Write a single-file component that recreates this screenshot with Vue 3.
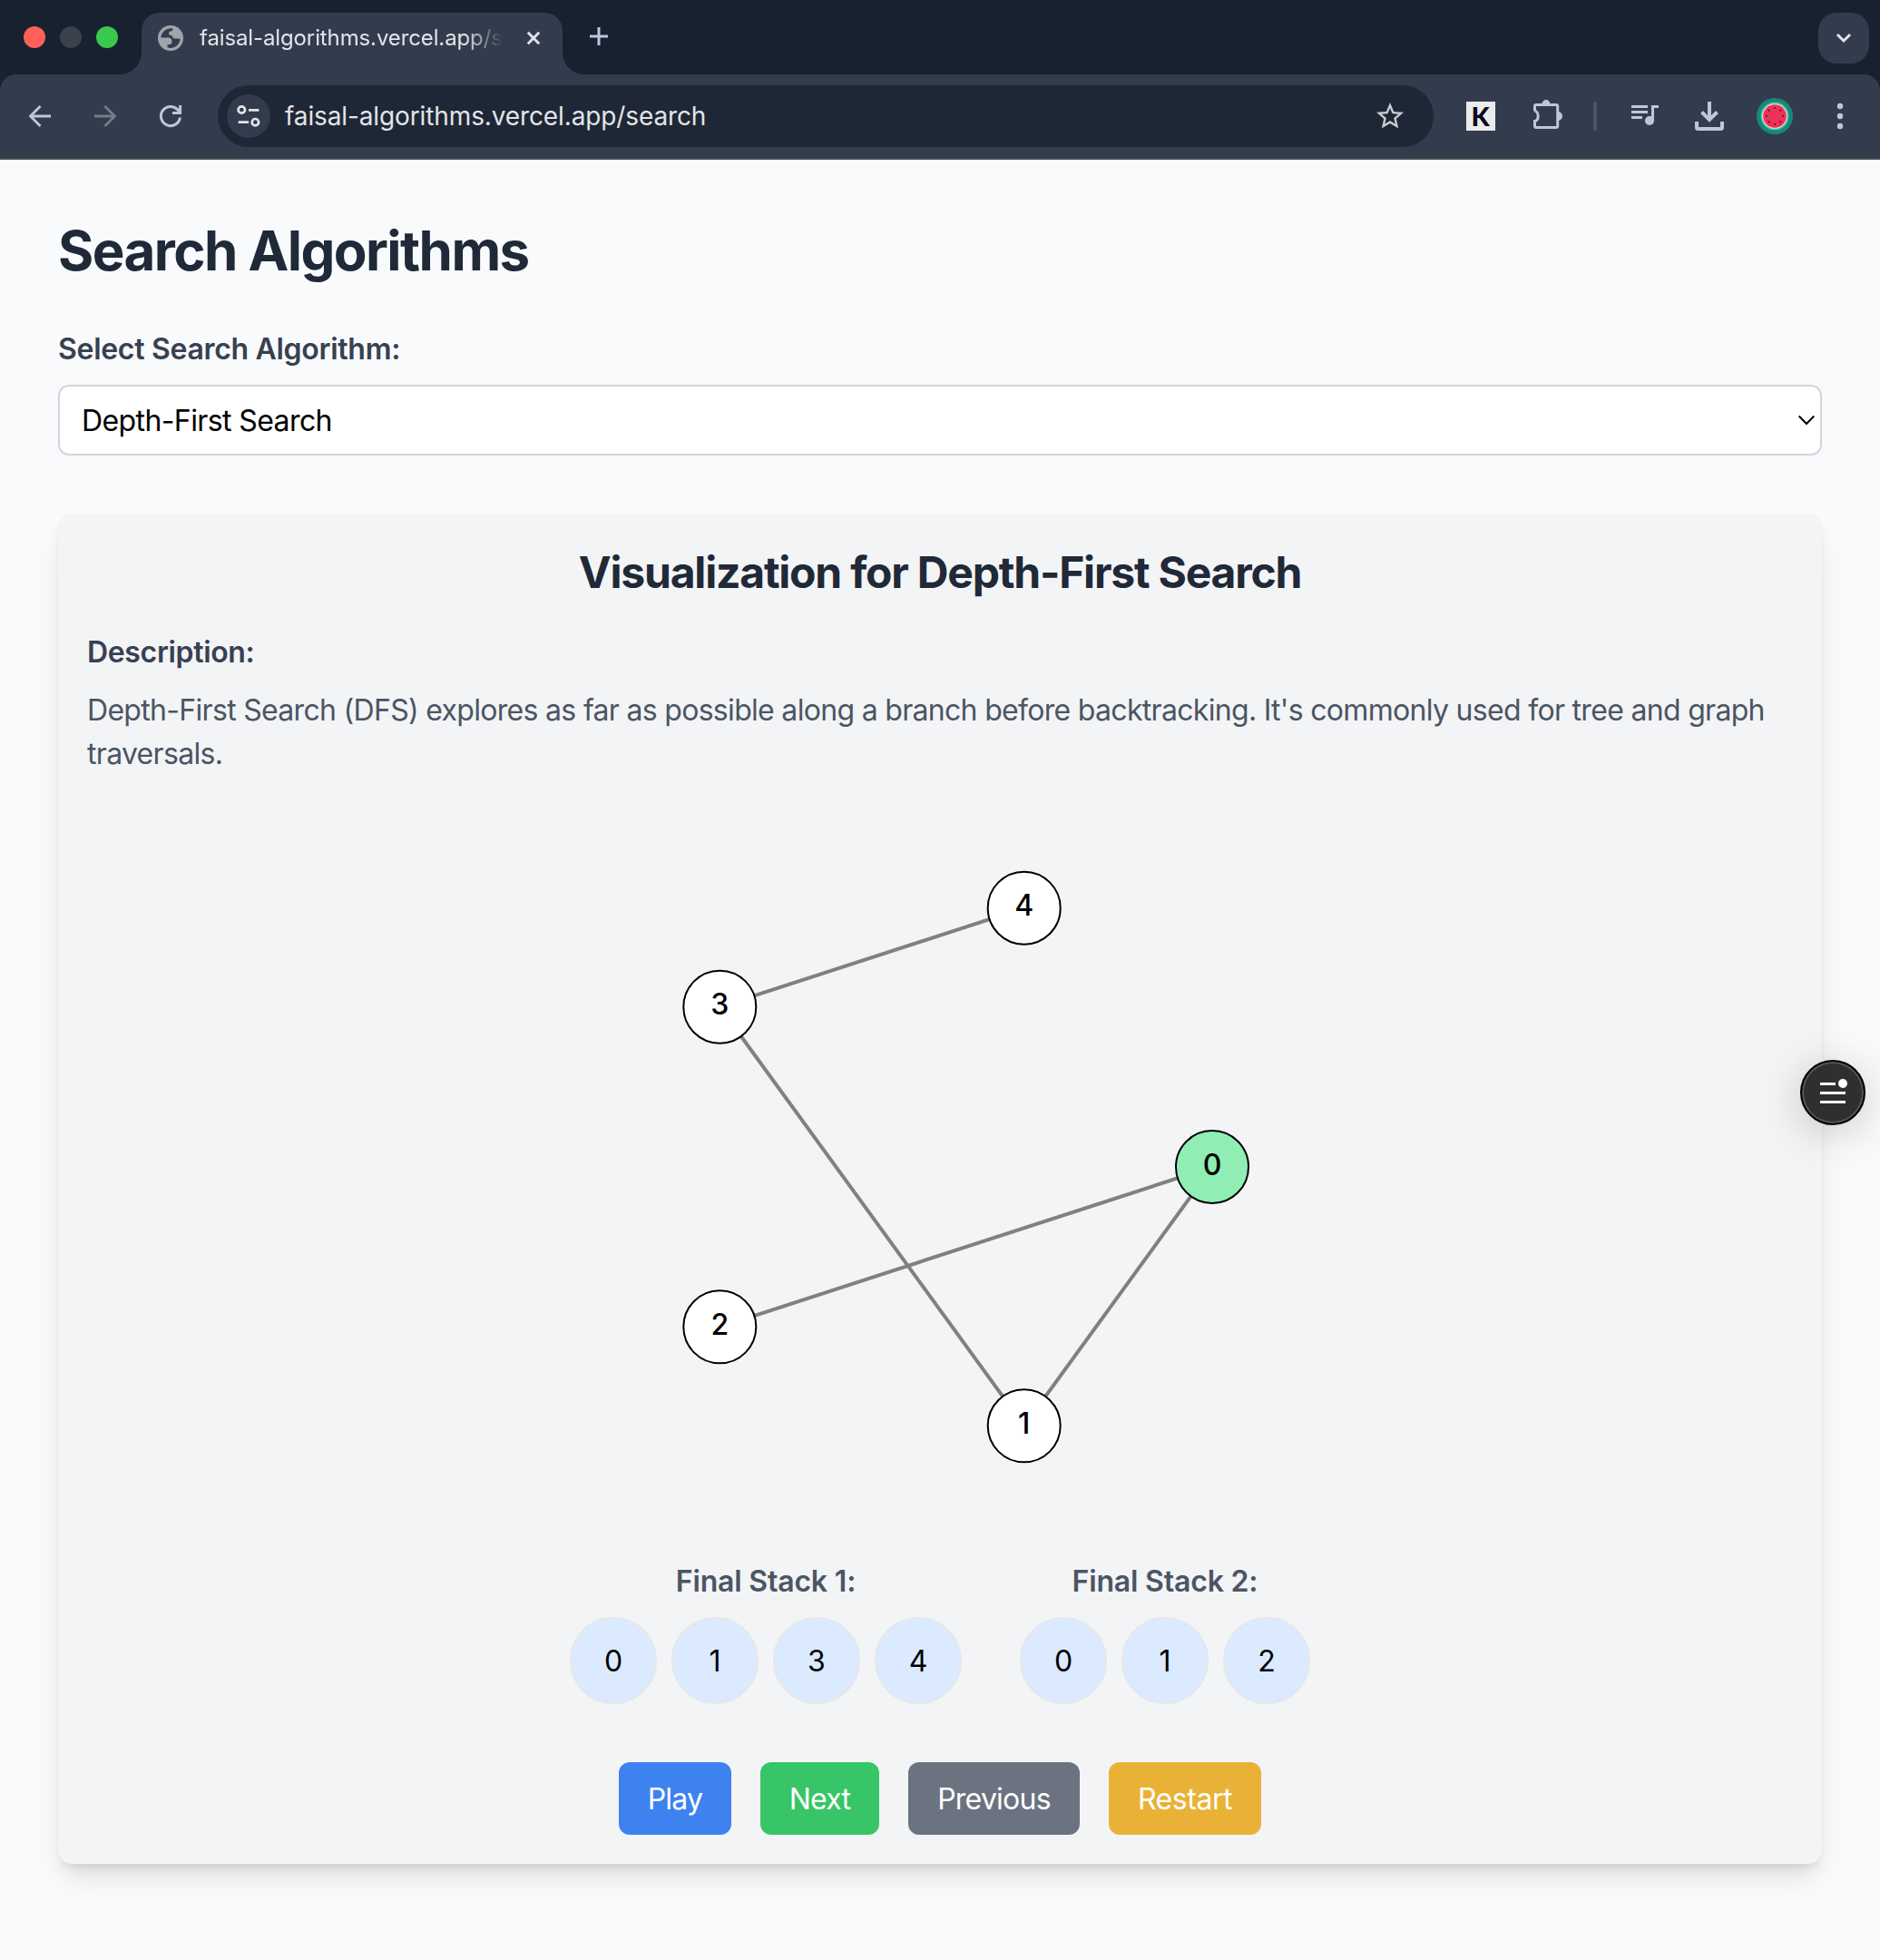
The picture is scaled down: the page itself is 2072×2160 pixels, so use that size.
<script setup>
const description =
  "Depth-First Search (DFS) explores as far as possible along a branch before backtracking. It's commonly used for tree and graph traversals."

const nodes = [
  { id: 0, x: 700, y: 400, active: true },
  { id: 1, x: 492.7, y: 685.3 },
  { id: 2, x: 157.3, y: 576.3 },
  { id: 3, x: 157.3, y: 223.7 },
  { id: 4, x: 492.7, y: 114.7 }
]

const edges = [
  [0, 1],
  [0, 2],
  [1, 3],
  [3, 4]
]

const stacks = [
  { title: 'Final Stack 1:', items: [0, 1, 3, 4] },
  { title: 'Final Stack 2:', items: [0, 1, 2] }
]

const seeds = Array.from({ length: 8 }, (_, i) => ({
  x: 20 + 9 * Math.cos((i * Math.PI) / 4),
  y: 20 + 9 * Math.sin((i * Math.PI) / 4)
}))
</script>

<template>
  <div class="window">
    <header class="tabstrip">
      <div class="lights">
        <span class="light red"></span>
        <span class="light dim"></span>
        <span class="light green"></span>
      </div>
      <div class="tab">
        <svg class="globe" width="28" height="28" viewBox="0 0 28 28">
          <circle cx="14" cy="14" r="14" fill="#a0a4ab" />
          <path
            d="M3.3 13.5C3.8 8 8.5 3.3 14.5 3.3L16.5 3.6 15.8 6.3Q12.2 6 12 8.5 12 11.2 15.5 11.2 16.5 14.6 19.5 14.6L24.7 14.8C24.2 20.5 19.5 24.9 14 24.9L10.4 24.2 10.6 21.3Q15.5 21.6 15.6 18 15.4 13.8 11.5 13.6Z"
            fill="#333c4d"
          />
        </svg>
        <span class="tab-title">faisal-algorithms.vercel.app/search</span>
        <svg class="close" width="16" height="16" viewBox="0 0 16 16">
          <path d="M1.8 1.8l12.4 12.4M14.2 1.8L1.8 14.2" stroke="#e3e4e8" stroke-width="2.9" />
        </svg>
      </div>
      <svg class="plus" width="20" height="20" viewBox="0 0 20 20">
        <path d="M10 0v20M0 10h20" stroke="#bfc6dc" stroke-width="3" />
      </svg>
      <button class="tab-search">
        <svg width="20" height="14" viewBox="0 0 20 14">
          <path d="M3 3l7 7 7-7" fill="none" stroke="#e3e4e8" stroke-width="3" />
        </svg>
      </button>
    </header>

    <div class="toolbar">
      <nav class="nav">
        <svg width="32" height="32" viewBox="0 0 32 32">
          <path d="M28 16H6M16.5 5L5.500 16l11 11" fill="none" stroke="#bfc6dc" stroke-width="2.8" />
        </svg>
        <svg width="32" height="32" viewBox="0 0 32 32">
          <path d="M4 16h22M15.500 5l11 11-11 11" fill="none" stroke="#767c89" stroke-width="2.8" />
        </svg>
        <svg width="32" height="32" viewBox="0 0 32 32">
          <path
            d="M26.5 17.500A10.600 10.600 0 1 1 23.600 8.600L26 11M26.600 4v8.500H18"
            fill="none"
            stroke="#bfc6dc"
            stroke-width="3"
          />
        </svg>
      </nav>
      <div class="omnibox">
        <span class="chip">
          <svg width="32" height="32" viewBox="0 0 32 32" fill="none" stroke="#e3e4e8" stroke-width="2.7">
            <circle cx="8.300" cy="9" r="3.700" />
            <path d="M16 9.300h11.400M4.700 22.700h11.400" />
            <circle cx="23.400" cy="22.700" r="3.700" />
          </svg>
        </span>
        <span class="url">faisal-algorithms.vercel.app/search</span>
        <svg class="star" width="36" height="36" viewBox="0 0 24 24">
          <path
            fill="#c8c9d0"
            d="M22 9.240l-7.190-.62L12 2 9.190 8.630 2 9.240l5.460 4.730L5.820 21 12 17.270 18.180 21l-1.630-7.030L22 9.240zM12 15.400l-3.760 2.270 1-4.280-3.320-2.880 4.380-.38L12 6.100l1.710 4.040 4.380.38-3.320 2.880 1 4.280L12 15.400z"
          />
        </svg>
      </div>
      <span class="ext-k">K</span>
      <svg class="puzzle" width="36" height="36" viewBox="0 0 36 36">
        <path
          d="M3.500 12.500V7Q3.500 5.500 5 5.500H27.200Q28.700 5.500 28.700 7V29Q28.700 30.500 27.200 30.500H5Q3.500 30.500 3.500 29V23.500A3.700 5.500 0 0 0 3.500 12.500"
          fill="none"
          stroke="#bfc6dc"
          stroke-width="3"
        />
        <path d="M11.500 5a4.500 5 0 0 1 9 0zM29 13a5 5 0 0 1 0 10z" fill="#bfc6dc" />
      </svg>
      <span class="divider"></span>
      <svg class="music" width="36" height="36" viewBox="0 0 36 36" fill="#bfc6dc">
        <path d="M2 6h18v3H2zM2 12h18v3H2zM2 18h12v3H2zM24 6h8v3h-5v14h-3z" />
        <circle cx="22" cy="23" r="5" />
      </svg>
      <svg class="download" width="36" height="36" viewBox="0 0 36 36" fill="none" stroke="#bfc6dc" stroke-width="4">
        <path d="M18 2v20M9.500 13.500L18 22l8.500-8.500M4 24v6.500Q4 32 5.500 32h25Q32 32 32 30.500V24" />
      </svg>
      <svg class="avatar" width="40" height="40" viewBox="0 0 40 40">
        <circle cx="20" cy="20" r="20" fill="#19877a" />
        <circle cx="20" cy="20" r="15.500" fill="#2fc9a4" />
        <circle cx="20" cy="20" r="14" fill="#f3cfc9" />
        <circle cx="20" cy="20" r="12.800" fill="#ed3157" />
        <circle v-for="(s, i) in seeds" :key="i" :cx="s.x" :cy="s.y" r="1.100" fill="#3a2430" />
      </svg>
      <svg class="dots" width="8" height="32" viewBox="0 0 8 32" fill="#bfc6dc">
        <circle cx="4" cy="5" r="3.200" />
        <circle cx="4" cy="16" r="3.200" />
        <circle cx="4" cy="27" r="3.200" />
      </svg>
    </div>

    <main class="page">
      <h1>Search Algorithms</h1>
      <label class="field-label">Select Search Algorithm:</label>
      <div class="select">
        <span>Depth-First Search</span>
        <svg width="20" height="14" viewBox="0 0 20 14">
          <path d="M1.700 2.500L10 11l8.300-8.500" fill="none" stroke="#000" stroke-width="2" />
        </svg>
      </div>

      <section class="card">
        <h2>Visualization for Depth-First Search</h2>
        <h3>Description:</h3>
        <p>{{ description }}</p>

        <svg class="graph" width="800" height="800" viewBox="0 0 800 800">
          <line
            v-for="([a, b], i) in edges"
            :key="i"
            :x1="nodes[a].x"
            :y1="nodes[a].y"
            :x2="nodes[b].x"
            :y2="nodes[b].y"
            stroke="gray"
            stroke-width="4"
          />
          <g v-for="n in nodes" :key="n.id">
            <circle :cx="n.x" :cy="n.y" r="40" :fill="n.active ? '#90eeb4' : '#fff'" stroke="#000" stroke-width="2" />
            <text :x="n.x" :y="n.y + 8.700" text-anchor="middle">{{ n.id }}</text>
          </g>
        </svg>

        <div class="stacks">
          <div v-for="s in stacks" :key="s.title" class="stack">
            <h4>{{ s.title }}</h4>
            <div class="items">
              <span v-for="n in s.items" :key="n" class="item">{{ n }}</span>
            </div>
          </div>
        </div>

        <div class="controls">
          <button class="play">Play</button>
          <button class="next">Next</button>
          <button class="previous">Previous</button>
          <button class="restart">Restart</button>
        </div>
      </section>
    </main>

    <div class="fab">
      <svg width="28" height="28" viewBox="0 0 28 28" fill="#fff">
        <path d="M0 4h17v3H0zM0 14h28v3H0zM0 24h28v3H0z" />
        <circle cx="25" cy="5" r="5" />
      </svg>
    </div>
  </div>
</template>

<style>
body {
  margin: 0;
  background: #f9fafc;
}
</style>

<style scoped>
* {
  box-sizing: border-box;
}

svg {
  display: block;
  flex: none;
}

.window {
  width: 2072px;
  height: 2160px;
  overflow: hidden;
  background: #18212f;
  font-family: Inter, 'Liberation Sans', sans-serif;
  display: flex;
  flex-direction: column;
}

.tabstrip {
  flex: none;
  height: 82px;
  display: flex;
  align-items: flex-start;
  padding: 0 12px 0 26px;
}

.lights {
  display: flex;
  gap: 16px;
  margin-top: 29px;
}

.light {
  width: 24px;
  height: 24px;
  border-radius: 50%;
}

.red {
  background: #ff6159;
}

.dim {
  background: #3a414b;
}

.green {
  background: #39c94f;
}

.tab {
  position: relative;
  width: 464px;
  height: 68px;
  margin: 14px 0 0 26px;
  padding: 0 24px 12px 18px;
  display: flex;
  align-items: center;
  background: #333c4d;
  border-radius: 20px 20px 0 0;
}

.tab::before,
.tab::after {
  content: '';
  position: absolute;
  bottom: 0;
  width: 24px;
  height: 24px;
}

.tab::before {
  left: -24px;
  background: radial-gradient(circle at 0 0, transparent 23.5px, #333c4d 24.5px);
}

.tab::after {
  right: -24px;
  background: radial-gradient(circle at 100% 0, transparent 23.5px, #333c4d 24.5px);
}

.tab-title {
  width: 334px;
  margin-left: 18px;
  overflow: hidden;
  white-space: nowrap;
  font-size: 24px;
  line-height: 54px;
  letter-spacing: -0.12px;
  color: #e3e4e8;
  mask-image: linear-gradient(to right, #000 calc(100% - 42px), transparent);
}

.close {
  margin-left: auto;
}

.plus {
  margin: 30px 0 0 30px;
}

.tab-search {
  width: 56px;
  height: 56px;
  margin: 14px 0 0 auto;
  padding: 0;
  border: 0;
  border-radius: 20px;
  background: #333c4d;
  display: flex;
  align-items: center;
  justify-content: center;
}

.toolbar {
  flex: none;
  height: 94px;
  display: flex;
  align-items: center;
  padding-left: 28px;
  background: #333c4d;
  border-bottom: 2px solid #484b51;
  border-radius: 18px 18px 0 0;
}

.nav {
  display: flex;
  gap: 40px;
}

.omnibox {
  width: 1340px;
  height: 68px;
  margin-left: 36px;
  padding: 0 30px 0 10px;
  display: flex;
  align-items: center;
  border-radius: 34px;
  background: #1e2735;
}

.chip {
  width: 48px;
  height: 48px;
  border-radius: 50%;
  background: #333c4d;
  display: flex;
  align-items: center;
  justify-content: center;
}

.url {
  margin-left: 16px;
  font-size: 28px;
  letter-spacing: -0.12px;
  color: #e3e4e8;
}

.star {
  margin-left: auto;
}

.ext-k {
  width: 32px;
  height: 32px;
  margin-left: 36px;
  padding-right: 1px;
  background: #ebebec;
  color: #0b0620;
  font: 900 29px/32px Lato, sans-serif;
  text-align: center;
}

.puzzle {
  margin-left: 40px;
}

.divider {
  width: 4px;
  height: 32px;
  margin-left: 32px;
  border-radius: 2px;
  background: #4c5468;
}

.music {
  margin-left: 36px;
}

.download,
.avatar {
  margin-left: 34px;
}

.dots {
  margin-left: 48px;
}

.page {
  flex: 1;
  padding: 64px;
  background: #f9fafc;
}

h1,
h2,
h3,
h4,
p {
  margin: 0;
}

h1 {
  margin-bottom: 49px;
  font-size: 60px;
  line-height: 72px;
  font-weight: 700;
  letter-spacing: -1.55px;
  color: #1f2937;
}

.field-label {
  display: block;
  margin-bottom: 15px;
  font-size: 32px;
  line-height: 48px;
  font-weight: 600;
  letter-spacing: -0.3px;
  color: #374151;
}

.select {
  height: 78px;
  margin-bottom: 64px;
  padding: 0 5px 0 24px;
  display: flex;
  align-items: center;
  justify-content: space-between;
  border: 2px solid #d1d5db;
  border-radius: 12px;
  background: #fff;
  font-size: 32px;
  letter-spacing: -0.6px;
  color: #000;
}

.card {
  height: 1488px;
  padding: 33px 32px 32px;
  border-radius: 16px;
  background: #f3f4f6;
  box-shadow: 0 20px 30px -6px rgba(0, 0, 0, 0.1), 0 8px 12px -4px rgba(0, 0, 0, 0.1);
}

h2 {
  margin-bottom: 32px;
  font-size: 48px;
  line-height: 64px;
  font-weight: 700;
  letter-spacing: -1.2px;
  text-align: center;
  color: #1f2937;
}

h3 {
  margin-bottom: 16px;
  font-size: 32px;
  line-height: 48px;
  font-weight: 600;
  letter-spacing: -0.34px;
  color: #374151;
}

p {
  font-size: 32px;
  line-height: 48px;
  letter-spacing: -0.69px;
  color: #4b5563;
}

.graph {
  margin: 31px auto 33px;
  font-size: 32px;
  font-weight: 500;
}

.stacks {
  display: flex;
  justify-content: center;
  gap: 64px;
}

.stack {
  display: flex;
  flex-direction: column;
  align-items: center;
}

h4 {
  margin-bottom: 15px;
  font-size: 32px;
  line-height: 48px;
  font-weight: 600;
  letter-spacing: -0.18px;
  color: #4b5563;
}

.items {
  display: flex;
  gap: 16px;
}

.item {
  width: 96px;
  height: 96px;
  display: flex;
  align-items: center;
  justify-content: center;
  border: 2px solid #e5e7eb;
  border-radius: 50%;
  background: #dbeafe;
  font-size: 32px;
  color: #000;
}

.controls {
  display: flex;
  justify-content: center;
  gap: 32px;
  margin-top: 64px;
}

.controls button {
  height: 80px;
  padding: 2px 0 0;
  border: 0;
  border-radius: 12px;
  font: 400 32px/48px Inter, sans-serif;
  letter-spacing: -0.75px;
  color: #fff;
}

.controls .play {
  width: 124px;
  background: #3e82f0;
}

.controls .next {
  width: 131px;
  background: #37c568;
}

.controls .previous {
  width: 189px;
  background: #6b7280;
}

.controls .restart {
  width: 168px;
  background: #e9b237;
  letter-spacing: -0.45px;
}

.fab {
  position: absolute;
  left: 1984px;
  top: 1168px;
  width: 72px;
  height: 72px;
  padding-bottom: 3px;
  border-radius: 50%;
  border: 2px solid #000;
  background: #2f2f2f;
  box-shadow: inset 0 0 0 2px #555, 0 8px 48px rgba(0, 0, 0, 0.2);
  display: flex;
  align-items: center;
  justify-content: center;
}

.fab svg {
  overflow: visible;
}
</style>
